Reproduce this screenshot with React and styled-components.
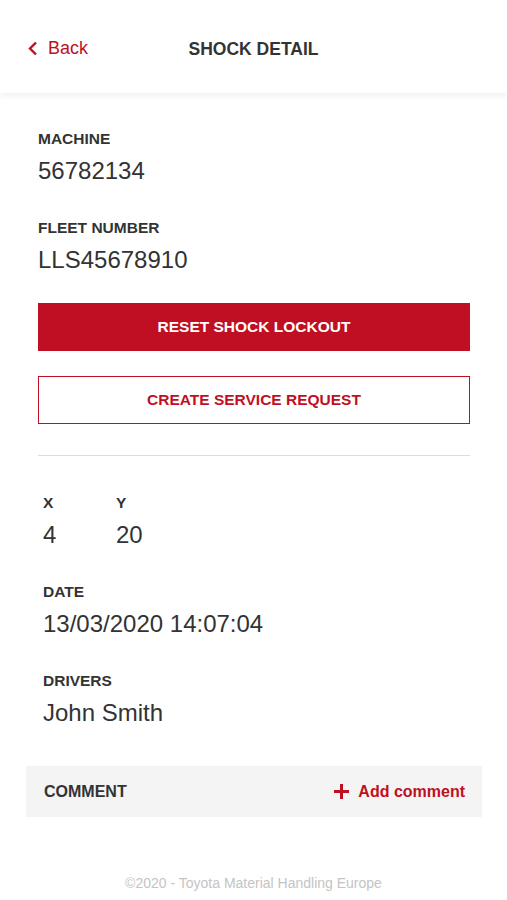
import React from "react";
import styled, { createGlobalStyle } from "styled-components";

const RED = "#c00f22";

const GlobalStyle = createGlobalStyle`
  body {
    margin: 0;
    background: #ffffff;
    font-family: "Liberation Sans", Arial, sans-serif;
    color: #333333;
  }
`;

const Page = styled.div`
  width: 507px;
  min-height: 900px;
  display: flex;
  flex-direction: column;
`;

const Header = styled.header`
  height: 93px;
  box-sizing: border-box;
  padding-top: 6px;
  display: flex;
  align-items: center;
  position: relative;
  background: #fff;
  box-shadow: 0 3px 6px rgba(0, 0, 0, 0.06);
  z-index: 1;
`;

const BackLink = styled.a`
  display: flex;
  align-items: center;
  gap: 9px;
  padding-left: 27px;
  margin-top: -2px;
  color: ${RED};
  font-size: 18px;
  text-decoration: none;
  cursor: pointer;
`;

const Title = styled.h1`
  flex: 1;
  margin: 0 0 0 -88px;
  text-align: center;
  font-size: 17.5px;
  font-weight: 600;
  color: #333;
`;

const Content = styled.main`
  padding: 36px 37px 0 38px;
  display: flex;
  flex-direction: column;
`;

const Field = styled.div`
  display: flex;
  flex-direction: column;
  gap: 7px;
  margin-bottom: ${(p) => p.$mb ?? 32}px;
`;

const Label = styled.div`
  font-size: 15.5px;
  line-height: 20px;
  font-weight: 600;
  color: #333;
`;

const Value = styled.div`
  font-size: 24px;
  line-height: 30px;
  color: #333;
`;

const Button = styled.button`
  height: 48px;
  width: 100%;
  border: 1.5px solid ${RED};
  background: ${(p) => (p.$primary ? RED : "#fff")};
  color: ${(p) => (p.$primary ? "#fff" : RED)};
  font-family: inherit;
  font-size: 15.5px;
  font-weight: 700;
  cursor: pointer;
  margin-bottom: ${(p) => p.$mb ?? 0}px;
`;

const Divider = styled.hr`
  border: none;
  border-top: 1.5px solid #dcdcdc;
  margin: 31px 0 37px;
`;

const Details = styled.section`
  padding-left: 5px;
  display: flex;
  flex-direction: column;
`;

const Coords = styled.div`
  display: grid;
  grid-template-columns: 73px auto;
  justify-content: start;
`;

const CommentBar = styled.div`
  margin: 6px 25px 0 26px;
  height: 51px;
  background: #f4f4f4;
  display: flex;
  align-items: center;
  justify-content: space-between;
  padding: 0 17px 0 18px;
`;

const CommentLabel = styled.span`
  font-size: 16px;
  font-weight: 600;
  color: #333;
`;

const AddComment = styled.a`
  display: flex;
  align-items: center;
  gap: 9px;
  color: ${RED};
  font-size: 16px;
  font-weight: 700;
  cursor: pointer;
`;

const Footer = styled.footer`
  margin-top: 58px;
  text-align: center;
  font-size: 14px;
  line-height: 17px;
  color: #c4c4c4;
`;

const Chevron = () => (
  <svg width="12" height="15" viewBox="0 0 12 15" fill="none">
    <path d="M9 1.5 L3 7.5 L9 13.5" stroke={RED} strokeWidth="2.4" />
  </svg>
);

const Plus = () => (
  <svg width="15" height="15" viewBox="0 0 15 15">
    <rect x="6" y="0" width="3" height="15" fill={RED} />
    <rect x="0" y="6" width="15" height="3" fill={RED} />
  </svg>
);

const App = () => {
  return (
    <Page>
      <GlobalStyle />
      <Header>
        <BackLink>
          <Chevron />
          Back
        </BackLink>
        <Title>SHOCK DETAIL</Title>
      </Header>
      <Content>
        <Field>
          <Label>MACHINE</Label>
          <Value>56782134</Value>
        </Field>
        <Field $mb={28}>
          <Label>FLEET NUMBER</Label>
          <Value>LLS45678910</Value>
        </Field>
        <Button $primary $mb={25}>
          RESET SHOCK LOCKOUT
        </Button>
        <Button>CREATE SERVICE REQUEST</Button>
        <Divider />
        <Details>
          <Coords>
            <Field>
              <Label>X</Label>
              <Value>4</Value>
            </Field>
            <Field>
              <Label>Y</Label>
              <Value>20</Value>
            </Field>
          </Coords>
          <Field>
            <Label>DATE</Label>
            <Value>13/03/2020 14:07:04</Value>
          </Field>
          <Field>
            <Label>DRIVERS</Label>
            <Value>John Smith</Value>
          </Field>
        </Details>
      </Content>
      <CommentBar>
        <CommentLabel>COMMENT</CommentLabel>
        <AddComment>
          <Plus />
          Add comment
        </AddComment>
      </CommentBar>
      <Footer>©2020 - Toyota Material Handling Europe</Footer>
    </Page>
  );
};

export default App;
